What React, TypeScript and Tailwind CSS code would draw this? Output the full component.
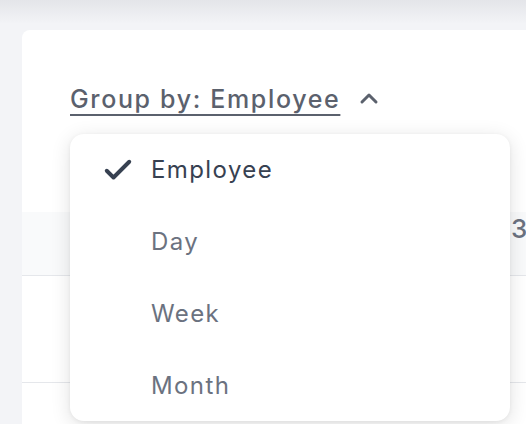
import React from "react";

export default function App() {
  const items = ["Employee", "Day", "Week", "Month"];
  return (
    <div
      className="relative w-[526px] h-[424px] overflow-hidden bg-[#f3f4f7]"
      style={{ fontFamily: "Inter, 'Noto Sans', sans-serif" }}
    >
      <div className="absolute inset-x-0 top-0 h-[24px] bg-gradient-to-b from-[#e4e5e9] to-[#f3f4f7]" />
      <div className="relative ml-[22px] mt-[30px] w-[560px] h-[460px] bg-white rounded-[8px]">
        <div className="pl-[48px] pt-[52px] flex items-center">
          <span className="text-[25px] leading-[34px] tracking-[1.65px] font-medium text-[#5b616d] underline decoration-2 underline-offset-[6px]">
            Group by: Employee
          </span>
          <svg width="24" height="24" viewBox="0 0 24 24" className="ml-[17px] text-[#5b616d]" fill="none" stroke="currentColor" strokeWidth="3" strokeLinecap="round" strokeLinejoin="round">
            <path d="M5 15l7-7 7 7" />
          </svg>
        </div>
        <div className="mt-[96px]">
          <div className="h-[64px] bg-[#f9fafb] border-b border-[#e5e7eb] pl-[489px] text-[26px] leading-[34px] font-medium text-[#6b7280]">
            3
          </div>
          <div className="h-[107px] border-b border-[#e5e7eb]" />
        </div>
        <div className="absolute left-[48px] top-[104px] w-[440px] h-[287px] bg-white rounded-[14px] shadow-[0_4px_20px_rgba(0,0,0,0.12),0_1px_4px_rgba(0,0,0,0.06)] flex flex-col">
          {items.map((it, i) => (
            <div key={it} className="h-[72px] flex items-center shrink-0">
              <div className="w-[81px] flex justify-end pr-[15px]">
                {i === 0 && (
                  <svg width="36" height="36" viewBox="0 0 24 24" fill="none" stroke="#374151" strokeWidth="2.6" strokeLinecap="round" strokeLinejoin="round">
                    <path d="M4.5 12.5l4.5 4.5 10.5-10.5" />
                  </svg>
                )}
              </div>
              <span className={`text-[24px] tracking-[1.4px] ${i === 0 ? "text-[#374151]" : "text-[#6b7280]"}`}>{it}</span>
            </div>
          ))}
        </div>
      </div>
    </div>
  );
}
